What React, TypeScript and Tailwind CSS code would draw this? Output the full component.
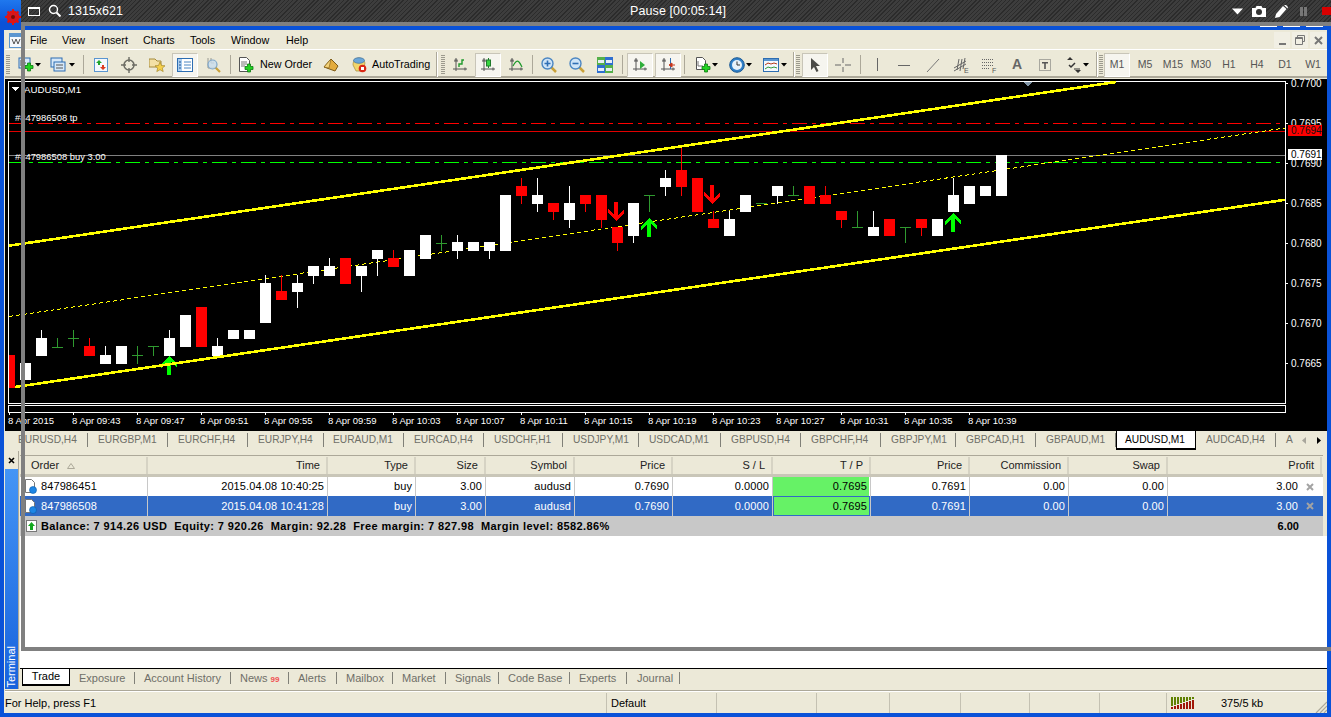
import type { ReactNode } from "react";

type Candle = [number, "w" | "r" | "d", number, number, number?, number?];

const candles: Candle[] = [
  [12, "r", 355, 388], [25, "w", 363, 380], [41, "w", 338, 356, 330],
  [57, "d", 347, 347, 338, 347], [73, "d", 338, 338, 330, 347],
  [89, "r", 346, 356, 338], [105, "w", 355, 364, 346], [121, "w", 346, 364],
  [137, "d", 355, 355, 346, 364], [153, "d", 346, 346, 346, 356],
  [169, "w", 338, 356, 330], [185, "w", 315, 347], [201, "r", 307, 347],
  [217, "w", 346, 356, 338], [233, "w", 330, 339], [249, "w", 330, 339],
  [265, "w", 283, 323, 275], [281, "r", 291, 300, 275], [297, "w", 283, 292, 275, 308],
  [313, "w", 266, 276, 266, 284], [329, "w", 266, 276, 258], [345, "r", 258, 284],
  [361, "w", 266, 276, 266, 292], [377, "w", 250, 259, 250, 276], [393, "r", 258, 267, 250],
  [409, "w", 250, 276], [425, "w", 235, 259], [441, "d", 243, 243, 235, 251],
  [457, "w", 242, 251, 235, 259], [473, "w", 242, 251], [489, "w", 242, 251, 242, 259],
  [505, "w", 195, 251], [521, "r", 186, 196, 178, 204], [537, "w", 195, 204, 178, 212],
  [553, "r", 203, 212, 203, 220], [569, "w", 203, 220, 186, 228], [585, "r", 195, 204, 195, 212],
  [601, "r", 195, 220, 195, 228], [617, "r", 227, 243, 227, 251], [633, "w", 203, 236, 203, 243],
  [649, "d", 195, 195, 195, 212], [665, "w", 178, 187, 170, 196], [681, "r", 170, 187, 147, 196],
  [697, "r", 178, 212], [713, "r", 219, 228, 211], [729, "w", 219, 236, 211],
  [745, "w", 195, 212], [761, "d", 203, 203, 203, 204], [777, "w", 186, 196, 186, 204],
  [793, "d", 195, 195, 186, 195], [809, "r", 186, 204], [825, "r", 195, 204, 186],
  [841, "r", 211, 220, 211, 228], [857, "d", 227, 227, 211, 227], [873, "w", 227, 236, 211],
  [889, "r", 219, 236], [905, "d", 227, 227, 227, 243], [921, "r", 219, 228, 219, 236],
  [937, "w", 219, 236], [953, "w", 195, 212, 178], [969, "w", 186, 204], [985, "w", 186, 196],
  [1001, "w", 155, 196],
];

const timeLabels = [
  "8 Apr 2015", "8 Apr 09:43", "8 Apr 09:47", "8 Apr 09:51", "8 Apr 09:55", "8 Apr 09:59",
  "8 Apr 10:03", "8 Apr 10:07", "8 Apr 10:11", "8 Apr 10:15", "8 Apr 10:19", "8 Apr 10:23",
  "8 Apr 10:27", "8 Apr 10:31", "8 Apr 10:35", "8 Apr 10:39",
];

const prices = ["0.7700", "0.7695", "0.7690", "0.7685", "0.7680", "0.7675", "0.7670", "0.7665"];

const symbolTabs: [string, string][] = [
  ["EURUSD,H4", "w-[83px] pl-[13px]"], ["EURGBP,M1", "w-[80px] pl-[10px]"],
  ["EURCHF,H4", "w-[80px] pl-[10px]"], ["EURJPY,H4", "w-[76px] pl-[10px]"],
  ["EURAUD,M1", "w-[80px] pl-[9px]"], ["EURCAD,H4", "w-[80px] pl-[10px]"],
  ["USDCHF,H1", "w-[79px] pl-[10px]"], ["USDJPY,M1", "w-[76px] pl-[10px]"],
  ["USDCAD,M1", "w-[82px] pl-[10px]"], ["GBPUSD,H4", "w-[80px] pl-[10px]"],
  ["GBPCHF,H4", "w-[80px] pl-[10px]"], ["GBPJPY,M1", "w-[75px] pl-[10px]"],
  ["GBPCAD,H1", "w-[80px] pl-[10px]"], ["GBPAUD,M1", "w-[80px] pl-[10px]"],
];

const bottomTabs: [string, string][] = [
  ["Exposure", "w-[65px] pl-[9px]"], ["Account History", "w-[96px] pl-[9px]"],
  ["News", "w-[58px] pl-[9px]"], ["Alerts", "w-[48px] pl-[9px]"],
  ["Mailbox", "w-[56px] pl-[9px]"], ["Market", "w-[53px] pl-[9px]"],
  ["Signals", "w-[53px] pl-[9px]"], ["Code Base", "w-[71px] pl-[9px]"],
  ["Experts", "w-[57px] pl-[9px]"], ["Journal", "w-[53px] pl-[10px]"],
];

const columns = ["Order", "Time", "Type", "Size", "Symbol", "Price", "S / L", "T / P", "Price", "Commission", "Swap", "Profit"];
const orders = [
  ["847986451", "2015.04.08 10:40:25", "buy", "3.00", "audusd", "0.7690", "0.0000", "0.7695", "0.7691", "0.00", "0.00", "3.00"],
  ["847986508", "2015.04.08 10:41:28", "buy", "3.00", "audusd", "0.7690", "0.0000", "0.7695", "0.7691", "0.00", "0.00", "3.00"],
];
const gridCols = "grid grid-cols-[128px_180px_88px_70px_89px_98px_100px_98px_99px_99px_99px_154px]";

function Ico({ children }: { children: ReactNode }) {
  return (
    <svg width="16" height="16" viewBox="0 0 16 16" className="shrink-0">
      {children}
    </svg>
  );
}

function Caret() {
  return (
    <svg width="6" height="4" viewBox="0 0 6 4" className="shrink-0">
      <path d="M0 0h6L3 3.5z" fill="#000" />
    </svg>
  );
}

function Plus({ x = 8, y = 8 }: { x?: number; y?: number }) {
  return <path d={`M${x + 2.5} ${y}h3v2.5h2.5v3h-2.5v2.5h-3v-2.5h-2.5v-3h2.5z`} fill="#22d322" stroke="#0d7a12" strokeWidth="0.8" />;
}

function Axes() {
  return <path d="M4 1v13M1 12h14M2 4h4M2.500 3h3M13 10.500v3" stroke="#555" strokeWidth="1" fill="none" />;
}

function Glass({ sign }: { sign: "+" | "-" }) {
  return (
    <Ico>
      <path d="M10 10l5 5" stroke="#c9a13a" strokeWidth="2.500" />
      <circle cx="6.500" cy="6.500" r="5.500" fill="#cfe4f7" stroke="#4b86c2" strokeWidth="1.400" />
      <path d={sign === "+" ? "M3.500 6.500h6M6.500 3.500v6" : "M3.500 6.500h6"} stroke="#2f6fb5" strokeWidth="1.600" />
    </Ico>
  );
}

function Btn({ active, className, children }: { active?: boolean; className: string; children: ReactNode }) {
  return (
    <div className={`flex h-[24px] shrink-0 items-center justify-center ${className}`}>
      {active ? (
        <div className="flex h-[24px] w-[26px] items-center justify-center border border-b-white border-l-[#c8c5b8] border-r-white border-t-[#c8c5b8] bg-[#f6f5ef]">
          {children}
        </div>
      ) : (
        children
      )}
    </div>
  );
}

function DropBtn({ className, children }: { className: string; children: ReactNode }) {
  return <div className={`flex h-[24px] shrink-0 items-center ${className}`}>{children}<Caret /></div>;
}

function Sep({ className }: { className: string }) {
  return (
    <div className={`flex shrink-0 justify-center ${className}`}>
      <div className="h-[19px] w-px bg-[#aca899]" />
    </div>
  );
}

function Grip({ className }: { className: string }) {
  return (
    <div className={`flex h-[24px] shrink-0 items-center ${className}`}>
      <div className="h-[20px] w-[4px] bg-[repeating-linear-gradient(180deg,#9c9a8e_0,#9c9a8e_1px,#ece9d8_1px,#ece9d8_2px)]" />
    </div>
  );
}

function Divider({ className }: { className: string }) {
  return (
    <div className={`flex h-[25px] shrink-0 justify-center ${className}`}>
      <div className="h-full w-[2px] border-r border-white bg-[#aca899]" />
    </div>
  );
}

function Toolbar() {
  return (
    <div className="flex h-[28px] shrink-0 items-center border-b-2 border-b-[#aca899] pt-[3px] text-[10.750px] text-black">
      <Grip className="w-[8px] pl-px" />
      <DropBtn className="w-[32px] gap-[1px] pl-[5px]">
        <Ico>
          <rect x="1" y="1" width="11" height="10" fill="#d7e8f8" stroke="#2d6db2" />
          <path d="M3 3v6h7M5 3v3h3" stroke="#555" fill="none" />
          <Plus x={7} y={6} />
        </Ico>
      </DropBtn>
      <DropBtn className="w-[35px] gap-[3px] pl-[5px]">
        <Ico>
          <rect x="1" y="1" width="11" height="9" fill="#d7e8f8" stroke="#2d6db2" />
          <rect x="4" y="5" width="11" height="9" fill="#d7e8f8" stroke="#2d6db2" />
          <path d="M6 8h7M6 11h7" stroke="#555" />
        </Ico>
      </DropBtn>
      <Sep className="w-[7px]" />
      <Btn className="w-[28px]">
        <Ico>
          <rect x="1.500" y="1.500" width="13" height="13" fill="#f4f8fd" stroke="#5a95d0" />
          <path d="M6 3l3 3H7v2H5V6H3z" fill="#1fa52a" />
          <path d="M10 13l-3-3h2V8h2v2h2z" fill="#dd3a20" />
        </Ico>
      </Btn>
      <Btn className="w-[28px]">
        <Ico>
          <circle cx="8" cy="8" r="5" fill="none" stroke="#6c6c64" strokeWidth="1.500" />
          <path d="M8 0v5M8 11v5M0 8h5M11 8h5" stroke="#6c6c64" strokeWidth="1.400" />
        </Ico>
      </Btn>
      <Btn className="w-[28px]">
        <Ico>
          <path d="M0 2h6l2 2h4v6H0z" fill="#f3e0a6" stroke="#a58a3b" />
          <path d="M11 5l1.500 3.500 3.500.3-2.700 2.300.9 3.500L11 12.700l-3.200 1.900.9-3.500L6 8.800l3.500-.3z" fill="#f5cf4a" stroke="#a5862a" strokeWidth="0.700" />
        </Ico>
      </Btn>
      <Btn active className="w-[28px]">
        <Ico>
          <rect x="0.500" y="1.500" width="15" height="13" fill="#fff" stroke="#2d6db2" />
          <rect x="1" y="2" width="4" height="12" fill="#a9cdf0" />
          <path d="M7 5h7M7 8h7M7 11h7" stroke="#4b86c2" />
          <path d="M2 5h2M2 8h2M2 11h2" stroke="#1d4f8e" />
        </Ico>
      </Btn>
      <Btn className="w-[28px]">
        <Ico>
          <path d="M3 1v10h9M6 1v5h3" stroke="#9a9a92" fill="none" />
          <path d="M10 10l5 5" stroke="#c9a13a" strokeWidth="2.200" />
          <circle cx="7.500" cy="7.500" r="4.500" fill="#c8dcef" fillOpacity="0.8" stroke="#7ea6c9" strokeWidth="1.200" />
        </Ico>
      </Btn>
      <Sep className="w-[7px]" />
      <div className="flex h-[24px] w-[83px] shrink-0 items-center gap-[6px] pl-[4px]">
        <Ico>
          <path d="M1.500.5h7l3 3v11h-10z" fill="#fff" stroke="#555" />
          <path d="M3 5h6M3 7h6M3 9h4" stroke="#777" />
          <Plus x={7} y={7} />
        </Ico>
        <span>New Order</span>
      </div>
      <Btn className="w-[28px]">
        <Ico>
          <path d="M1 10l7-8 7 7-3 5z" fill="#e3ab3d" stroke="#7d5a16" />
          <path d="M1 10l5 1 2-9z" fill="#f3d279" stroke="#7d5a16" strokeWidth="0.600" />
        </Ico>
      </Btn>
      <div className="flex h-[24px] w-[89px] shrink-0 items-center gap-[5px] pl-[6px]">
        <Ico>
          <path d="M2 8c0-5 3-7 6-7s5 2 6 5l-2 8H5z" fill="#f2d66b" stroke="#a58a3b" strokeWidth="0.700" />
          <ellipse cx="8" cy="3.500" rx="5.500" ry="2.800" fill="#6aa6d8" stroke="#3a6f9f" strokeWidth="0.700" />
          <circle cx="11.500" cy="11.500" r="3.800" fill="#d92815" />
          <rect x="10" y="10" width="3" height="3" fill="#fff" />
        </Ico>
        <span>AutoTrading</span>
      </div>
      <Divider className="w-[5px]" />
      <Grip className="w-[7px] pl-[2px]" />
      <Btn className="w-[28px]">
        <Ico>
          <Axes />
          <path d="M7 10V7h3V3h2" stroke="#1f9a2c" strokeWidth="1.400" fill="none" />
        </Ico>
      </Btn>
      <Btn active className="w-[28px]">
        <Ico>
          <Axes />
          <path d="M8.500 1v10" stroke="#1f7a2c" />
          <rect x="6.500" y="3" width="4" height="6" fill="#35d43e" stroke="#1f7a2c" />
        </Ico>
      </Btn>
      <Btn className="w-[28px]">
        <Ico>
          <Axes />
          <path d="M5 9c2-4 4-6 6-4 1 1 2 3 3 5" stroke="#1f9a2c" strokeWidth="1.200" fill="none" />
        </Ico>
      </Btn>
      <Sep className="w-[5px]" />
      <Btn className="w-[28px]"><Glass sign="+" /></Btn>
      <Btn className="w-[28px]"><Glass sign="-" /></Btn>
      <Btn className="w-[28px]">
        <Ico>
          <rect x="0" y="0" width="8" height="8" fill="#55b04a" />
          <rect x="8" y="0" width="8" height="8" fill="#2f6fd0" />
          <rect x="0" y="8" width="8" height="8" fill="#2f6fd0" />
          <rect x="8" y="8" width="8" height="8" fill="#55b04a" />
          <path d="M1 3h6v3H1zM9 3h6v3H9zM1 11h6v3H1zM9 11h6v3H9z" fill="#e6eef6" />
        </Ico>
      </Btn>
      <Sep className="w-[7px]" />
      <Btn active className="w-[28px]">
        <Ico>
          <Axes />
          <path d="M8 4l5 4-5 4z" fill="#2fae3a" />
        </Ico>
      </Btn>
      <Btn active className="w-[28px]">
        <Ico>
          <Axes />
          <path d="M10.500 1v11" stroke="#2d6db2" />
          <path d="M15 8H12M12 6l-3 2 3 2z" fill="#c8361a" stroke="#c8361a" />
        </Ico>
      </Btn>
      <Sep className="w-[5px]" />
      <DropBtn className="w-[36px] gap-[1px] pl-[8px]">
        <Ico>
          <path d="M1.500.5h6l3 3v9h-9z" fill="#fff" stroke="#555" />
          <path d="M3 4v5h5" stroke="#777" fill="none" />
          <Plus x={7} y={7} />
        </Ico>
      </DropBtn>
      <DropBtn className="w-[33px] gap-[1px] pl-[6px]">
        <Ico>
          <circle cx="8" cy="8" r="7.300" fill="#2f7fc8" stroke="#1d5a94" />
          <circle cx="8" cy="8" r="5" fill="#e8f2fa" />
          <path d="M8 4.500V8h3" stroke="#333" fill="none" />
        </Ico>
      </DropBtn>
      <DropBtn className="w-[35px] gap-[2px] pl-[7px]">
        <Ico>
          <rect x="0.500" y="1.500" width="15" height="13" fill="#f4f8fd" stroke="#2d6db2" />
          <rect x="1" y="2" width="14" height="2" fill="#5a95d0" />
          <path d="M2 8l3-2 3 1 3-1 3 1" stroke="#b23a1a" fill="none" />
          <path d="M2 12l3-2 3 1 3-1 3 1" stroke="#2f9a3a" fill="none" />
        </Ico>
      </DropBtn>
      <Divider className="w-[5px]" />
      <Grip className="w-[5px]" />
      <Btn active className="w-[28px]">
        <Ico><path d="M4 1l9 8H9l2.500 5-2 1L7 10l-3 3z" fill="#4a4a46" /></Ico>
      </Btn>
      <Btn className="w-[28px]">
        <Ico><path d="M0 8h6M10 8h6M8 1v5M8 10v5" stroke="#666" strokeWidth="1" /></Ico>
      </Btn>
      <Sep className="w-[6px]" />
      <Btn className="w-[28px]">
        <Ico><path d="M8.500 1v13" stroke="#666" /></Ico>
      </Btn>
      <Btn className="w-[28px]">
        <Ico><path d="M1 8.500h12" stroke="#666" /></Ico>
      </Btn>
      <Btn className="w-[28px]">
        <Ico><path d="M2 15L14 2" stroke="#777" /></Ico>
      </Btn>
      <Btn className="w-[28px]">
        <Ico>
          <path d="M1 11L13 4M1 14L13 7M4 13l2-11M7 14l2-12M10 12l2-11" stroke="#666" fill="none" />
          <text x="11" y="16" fontSize="7" fill="#555" fontFamily="Liberation Sans, sans-serif">E</text>
        </Ico>
      </Btn>
      <Btn className="w-[28px]">
        <Ico>
          <path d="M1 2.500h12M1 5.500h12M1 8.500h12M1 11.500h7" stroke="#666" strokeDasharray="1 1" />
          <text x="11" y="16" fontSize="7" fill="#555" fontFamily="Liberation Sans, sans-serif">F</text>
        </Ico>
      </Btn>
      <Btn className="w-[28px]">
        <span className="text-[14px] font-bold text-[#666]">A</span>
      </Btn>
      <Btn className="w-[28px]">
        <Ico>
          <rect x="2.500" y="2.500" width="11" height="11" fill="none" stroke="#666" strokeDasharray="1 1" />
          <path d="M5 5h6v1.500H8.800V12H7.200V6.500H5z" fill="#555" />
        </Ico>
      </Btn>
      <DropBtn className="w-[36px] gap-[1px] pl-[7px]">
        <Ico>
          <path d="M1 3l3-3 3 3zM9 13l3 3 3-3z" fill="#333" />
          <path d="M3 8l2 2 4-4" stroke="#333" strokeWidth="1.500" fill="none" />
          <path d="M8 12h6" stroke="#333" />
        </Ico>
      </DropBtn>
      <Divider className="w-[3px]" />
      <Grip className="w-[5px] pl-px" />
      {["M1", "M5", "M15", "M30", "H1", "H4", "D1", "W1"].map((p, i) => (
        <Btn key={p} active={i === 0} className="w-[28px]">
          <span className="text-[10.500px] text-[#555]">{p}</span>
        </Btn>
      ))}
    </div>
  );
}

function ArrowMark({ cx, y, down }: { cx: number; y: number; down?: boolean }) {
  const d = down
    ? `M${cx} ${y + 19}l8-8v-4l-6 6V${y}h-4v${13}l-6-6v4z`
    : `M${cx} ${y}l8 8v4l-6-6V${y + 19}h-4V${y + 6}l-6 6v-4z`;
  return <path d={d} fill={down ? "#ff0000" : "#00ff00"} />;
}

function Chart() {
  return (
    <svg width="1322" height="352" viewBox="5 79 1322 352" className="block shrink-0 bg-black" shapeRendering="crispEdges">
      <rect x="8.500" y="81.500" width="1277" height="322" fill="none" stroke="#fff" />
      <rect x="8.500" y="405.500" width="1277" height="7" fill="none" stroke="#fff" />

      <path d="M9 123.500H1285" stroke="#f00" strokeDasharray="15 5 4 5" />
      <path d="M9 131.500H1285" stroke="#e00000" />
      <path d="M9 155.500H1285" stroke="#808080" />
      <path d="M9 162.500H1285" stroke="#0f0" strokeDasharray="15 5 4 5" />
      <path d="M9 316.500L1285 128" stroke="#ff0" strokeDasharray="4 3" />

      {candles.map(([cx, kind, top, bot, hi, lo]) => {
        const color = kind === "r" ? "#f00" : kind === "w" ? "#fff" : "#2f9a2f";
        return (
          <g key={cx} fill={color}>
            {hi !== undefined && <rect x={cx} y={hi} width="1" height={(lo ?? bot) - hi} />}
            {kind === "d" ? (
              <rect x={cx - 5} y={top} width="11" height="1" />
            ) : (
              <rect x={cx === 12 ? 9 : cx - 5} y={top} width={cx === 12 ? 6 : 11} height={bot - top} />
            )}
          </g>
        );
      })}

      <ArrowMark cx={169} y={356} />
      <ArrowMark cx={649} y={218} />
      <ArrowMark cx={953} y={213} />
      <ArrowMark cx={616} y={202} down />
      <ArrowMark cx={712} y={185} down />

      <path d="M9 245.700L1116 82" stroke="#ff0" strokeWidth="2.600" />
      <path d="M15 387L1285 199.800" stroke="#ff0" strokeWidth="2.600" />

      <path d="M1023 82h10l-5 4.500z" fill="#7f93a5" />
      <path d="M12 87h7l-3.500 4z" fill="#fff" />

      <g fontFamily="Liberation Sans, sans-serif" fontSize="10" fill="#fff" shapeRendering="auto">
        <text x="24" y="93" fontSize="9.700">AUDUSD,M1</text>
        <text x="15" y="121" fontSize="9.400">#847986508 tp</text>
        <text x="15" y="160" fontSize="9.400">#847986508 buy 3.00</text>
        {prices.map((p, i) => (
          <g key={p}>
            <rect x="1285" y={83 + i * 40} width="3" height="1" shapeRendering="crispEdges" />
            <text x="1291" y={87 + i * 40}>{p}</text>
          </g>
        ))}
        {timeLabels.map((t, i) => (
          <g key={t}>
            <rect x={9 + i * 64} y="412" width="1" height="3" shapeRendering="crispEdges" />
            <text x={8 + i * 64} y="424" fontSize="9.500">{t}</text>
          </g>
        ))}
        <rect x="1288" y="125" width="34" height="11" fill="#f00" shapeRendering="crispEdges" />
        <text x="1291" y="134" fill="#111">0.7694</text>
        <rect x="1288" y="149" width="34" height="11" fill="#fff" shapeRendering="crispEdges" />
        <text x="1291" y="158" fill="#000">0.7691</text>
      </g>
    </svg>
  );
}

function SymbolTabs() {
  return (
    <div className="flex h-[20px] shrink-0 text-[10.200px] text-[#6f6f68]">
      {symbolTabs.map(([name, cls]) => (
        <div key={name} className={`mt-[2px] flex h-[14px] shrink-0 items-center border-r border-r-[#808078] ${cls}`}>
          {name}
        </div>
      ))}
      <div className="flex h-[19px] w-[80px] shrink-0 items-center border-x border-b-2 border-black bg-white pl-[8px] text-black">
        AUDUSD,M1
      </div>
      <div className="mt-[2px] flex h-[14px] w-[80px] shrink-0 items-center border-r border-r-[#808078] pl-[10px]">AUDCAD,H4</div>
      <div className="mt-[2px] flex h-[14px] items-center pl-[10px]">A</div>
      <div className="ml-auto mt-[2px] flex h-[14px] items-center gap-[11px] pr-[6px]">
        <svg width="4" height="7" viewBox="0 0 4 7"><path d="M4 0v7L0 3.500z" fill="#a8a69c" /></svg>
        <svg width="4" height="7" viewBox="0 0 4 7"><path d="M0 0v7l4-3.500z" fill="#000" /></svg>
      </div>
    </div>
  );
}

function OrderIcon() {
  return (
    <svg width="12" height="15" viewBox="0 0 12 15" className="shrink-0">
      <path d="M.500.500h6l3 3v10h-9z" fill="#fff" stroke="#777" />
      <circle cx="8" cy="11" r="3.500" fill="#1d86e6" stroke="#0c5aa8" strokeWidth="0.600" />
    </svg>
  );
}

function TerminalPanel() {
  return (
    <div className="flex min-h-0 flex-1">
      <div className="flex w-[13px] shrink-0 flex-col">
        <div className="flex h-[18px] items-start justify-center pt-[6px]">
          <svg width="7" height="7" viewBox="0 0 7 7"><path d="M1 1l5 5M6 1L1 6" stroke="#000" strokeWidth="1.600" /></svg>
        </div>
        <div className="flex flex-1 items-end justify-center bg-[linear-gradient(180deg,#4595f5,#1763dd)] pb-px">
          <span className="text-[11px] text-white [writing-mode:vertical-rl] rotate-180">Terminal</span>
        </div>
      </div>
      <div className="w-[2px] shrink-0 border-l border-l-[#aca899]" />
      <div className="flex min-w-0 flex-1 flex-col text-[11px]">
        <div className="mt-[4px] w-[1303px] shrink-0 border-t border-t-[#aca899]">
          <div className={`${gridCols} h-[18px] pt-px text-[#222]`}>
            {columns.map((c, i) => (
              <div key={i} className={`flex items-center border-r-2 border-r-[#d6d3c4] pr-[6px] ${i === 0 ? "justify-start pl-[11px]" : "justify-end"}`}>
                <span>{c}</span>
                {i === 0 && (
                  <svg width="8" height="6" viewBox="0 0 8 6" className="ml-[8px]"><path d="M4 .500L7.500 5.500H.500z" fill="none" stroke="#aca899" /></svg>
                )}
              </div>
            ))}
          </div>
          <div className="h-[3px] bg-[#c9c6b8]" />
          {orders.map((row, r) => (
            <div key={row[0]} className={`${gridCols} tracking-[0.1px] ${r === 0 ? "h-[19px] bg-white text-black" : "h-[20px] bg-[#316ac5] text-white"}`}>
              {row.map((v, i) => {
                if (i === 0)
                  return (
                    <div key={i} className="flex items-center gap-[4px] border-r border-r-[#c8c8c8] pl-[5px]">
                      <OrderIcon />
                      {v}
                    </div>
                  );
                if (i === 7)
                  return (
                    <div key={i} className="flex border-r border-r-[#c8c8c8]">
                      <div className={`flex flex-1 items-center justify-end bg-[#66f266] pr-[2px] text-black ${r === 0 ? "mr-px" : "m-px"}`}>
                        {v}
                      </div>
                    </div>
                  );
                if (i === 11)
                  return (
                    <div key={i} className="flex items-center justify-end gap-[8px] pr-[8px]">
                      {v}
                      <svg width="8" height="8" viewBox="0 0 8 8"><path d="M1 1l6 6M7 1L1 7" stroke="#a3a3a3" strokeWidth="2" /></svg>
                    </div>
                  );
                return (
                  <div key={i} className="flex items-center justify-end border-r border-r-[#c8c8c8] pr-[3px]">
                    {v}
                  </div>
                );
              })}
            </div>
          ))}
          <div className="flex h-[20px] items-center bg-[#c8c8c8] pl-[6px] font-bold text-black">
            <svg width="11" height="12" viewBox="0 0 11 12" className="mr-[4px] shrink-0">
              <rect x="0.500" y="0.500" width="10" height="11" fill="#fff" stroke="#777" />
              <path d="M5.500 2L9 6H7v4H4V6H2z" fill="#13a81f" />
            </svg>
            <span className="whitespace-pre tracking-[0.4px]">Balance: 7 914.26 USD  Equity: 7 920.26  Margin: 92.28  Free margin: 7 827.98  Margin level: 8582.86%</span>
            <span className="ml-auto pr-[24px]">6.00</span>
          </div>
        </div>
        <div className="min-h-0 flex-1 bg-white" />
        <div className="flex h-[21px] shrink-0 border-t border-t-black text-[#6f6f68]">
          <div className="ml-[2px] flex h-[17px] w-[48px] shrink-0 items-center justify-center border-x border-b-2 border-black bg-white text-black">
            Trade
          </div>
          {bottomTabs.map(([name, cls]) => (
            <div key={name} className={`mt-[3px] flex h-[12px] shrink-0 items-center border-r border-r-[#808078] ${cls}`}>
              {name}
              {name === "News" && <span className="ml-[3px] mt-[3px] text-[8px] font-bold text-[#f05050]">99</span>}
            </div>
          ))}
        </div>
      </div>
    </div>
  );
}

function StatusBar() {
  return (
    <div className="flex h-[20px] shrink-0 items-center text-[11px] text-black">
      <div className="w-[601px] shrink-0">For Help, press F1</div>
      <div className="flex h-full w-[110px] shrink-0 items-center border-l border-l-[#c4c1b2] pl-[4px]">Default</div>
      <div className="h-full w-[100px] shrink-0 border-l border-l-[#c4c1b2]" />
      <div className="h-full w-[73px] shrink-0 border-l border-l-[#c4c1b2]" />
      <div className="h-full w-[71px] shrink-0 border-l border-l-[#c4c1b2]" />
      <div className="h-full w-[69px] shrink-0 border-l border-l-[#c4c1b2]" />
      <div className="h-full w-[70px] shrink-0 border-l border-l-[#c4c1b2]" />
      <div className="h-full w-[67px] shrink-0 border-l border-l-[#c4c1b2]" />
      <div className="flex h-full flex-1 items-center border-l border-l-[#c4c1b2] pl-[4px]">
        <svg width="24" height="12" viewBox="0 0 24 12" className="shrink-0" shapeRendering="crispEdges">
          {[0, 1, 2, 3, 4, 5, 6, 7].map((i) => (
            <g key={i}>
              <rect x={i * 3} y="0" width="2" height={9 - i} fill="#5f8000" />
              <rect x={i * 3} y={10 - i} width="2" height={2 + i} fill="#a01808" />
            </g>
          ))}
        </svg>
        <span className="ml-[26px]">375/5 kb</span>
        <svg width="12" height="12" viewBox="0 0 12 12" className="ml-auto self-end">
          <path d="M12 1L1 12M12 5L5 12M12 9L9 12" stroke="#aca899" strokeWidth="1.200" />
        </svg>
      </div>
    </div>
  );
}

export default function App() {
  return (
    <div className="relative flex h-[717px] w-[1331px] flex-col overflow-hidden bg-[#0a52d8] [font-family:'Liberation_Sans',sans-serif]">
      <div className="flex h-[22px] shrink-0">
        <div className="flex w-[21px] shrink-0 items-end justify-end bg-[linear-gradient(180deg,#1f78ee,#0a52d8)]">
          <svg width="16" height="16" viewBox="0 0 16 16" className="-mb-[3px]">
            <circle cx="8" cy="8" r="5" fill="none" stroke="#e01414" strokeWidth="3" />
            <path d="M8 0v16M0 8h16M2.500 2.500l11 11M13.500 2.500l-11 11" stroke="#e01414" strokeWidth="2" />
            <circle cx="8" cy="8" r="2" fill="#7a0a0a" />
          </svg>
        </div>
        <div className="flex min-w-0 flex-1 items-center bg-[repeating-linear-gradient(135deg,#2b2b2b_0,#2b2b2b_1px,#3d3d3d_1px,#3d3d3d_3px)] text-[12.500px] text-white">
          <div className="flex w-[609px] shrink-0 items-center pl-[7px]">
            <div className="h-[9px] w-[12px] border-[1.500px] border-t-2 border-white" />
            <svg width="14" height="14" viewBox="0 0 14 14" className="ml-[8px] shrink-0">
              <circle cx="5.500" cy="5.500" r="4" fill="none" stroke="#fff" strokeWidth="1.400" />
              <path d="M8.500 8.500l4 4" stroke="#fff" strokeWidth="2" />
            </svg>
            <span className="ml-[6px]">1315x621</span>
          </div>
          <span className="tracking-[0.1px]">Pause [00:05:14]</span>
          <div className="ml-auto flex items-center">
            <svg width="11" height="7" viewBox="0 0 11 7"><path d="M0 .5h11L5.500 6.500z" fill="#fff" /></svg>
            <svg width="14" height="11" viewBox="0 0 14 11" className="ml-[9px]">
              <path d="M0 2h3.500l1-2h5l1 2H14v9H0z" fill="#fff" />
              <circle cx="7" cy="6" r="3" fill="#333" />
            </svg>
            <svg width="13" height="13" viewBox="0 0 13 13" className="ml-[9px]">
              <path d="M0 13l1-4 7-8 3.500 3-7 8zM9 0l1.500-.500 2.500 2.500-.500 1.500z" fill="#fff" />
            </svg>
            <div className="ml-[12px] h-[9px] w-[7px] border-x-[3px] border-[#777]" />
            <div className="ml-[15px] h-[8px] w-[9px] bg-[#d80000]" />
          </div>
        </div>
      </div>

      <div className="flex h-[8px] shrink-0 items-start justify-end gap-[6px] pr-[8px]">
        <div className="mt-[4px] h-px w-[17px] bg-white" />
        <div className="mt-[4px] h-px w-[17px] bg-white" />
        <div className="mt-[4px] h-px w-[17px] bg-white" />
      </div>

      <div className="mx-[4px] flex min-h-0 flex-1 flex-col bg-[#ece9d8] pl-px">
        <div className="flex h-[20px] shrink-0 items-center border-b border-b-white pt-px text-[10.750px] text-black">
          <div className="w-[25px] shrink-0 pl-[4px]">
            <svg width="16" height="15" viewBox="0 0 16 15" className="block">
              <rect x="0.500" y="0.500" width="15" height="14" fill="#f4f8fd" stroke="#5a95d0" />
              <rect x="1" y="1" width="14" height="3" fill="#5a95d0" />
              <path d="M3 6l2 5 2-5 2 5 2-5" stroke="#555" fill="none" />
            </svg>
          </div>
          <div className="w-[32px] shrink-0">File</div>
          <div className="w-[39px] shrink-0">View</div>
          <div className="w-[42px] shrink-0">Insert</div>
          <div className="w-[47px] shrink-0">Charts</div>
          <div className="w-[41px] shrink-0">Tools</div>
          <div className="w-[55px] shrink-0">Window</div>
          <div className="shrink-0">Help</div>
          <div className="ml-auto flex gap-[2px] pr-px">
            <div className="flex h-[16px] w-[16px] items-end justify-center bg-[#f1efe4] pb-[3px]">
              <div className="h-[2px] w-[7px] bg-[#777]" />
            </div>
            <div className="flex h-[16px] w-[16px] items-center justify-center bg-[#f1efe4]">
              <svg width="10" height="10" viewBox="0 0 10 10"><path d="M2.500 2.500v-2h7v6h-2M.5 2.500h7v7h-7zM.5 3.500h7" stroke="#777" fill="none" /></svg>
            </div>
            <div className="flex h-[16px] w-[16px] items-center justify-center bg-[#f1efe4]">
              <svg width="9" height="9" viewBox="0 0 9 9"><path d="M1 1l7 7M8 1L1 8" stroke="#777" strokeWidth="2" /></svg>
            </div>
          </div>
        </div>
        <Toolbar />
        <div className="h-px shrink-0 bg-[#ece9d8]" />
        <Chart />
        <SymbolTabs />
        <TerminalPanel />
        <div className="flex h-[4px] shrink-0 flex-col justify-center">
          <div className="h-[2px] border-b border-b-white bg-[#aca899]" />
        </div>
        <StatusBar />
      </div>

      <div className="h-[4px] shrink-0" />

      <div className="absolute left-[21px] right-0 top-[22px] h-[629px] border-y-4 border-l-4 border-[#808080]" />
    </div>
  );
}
